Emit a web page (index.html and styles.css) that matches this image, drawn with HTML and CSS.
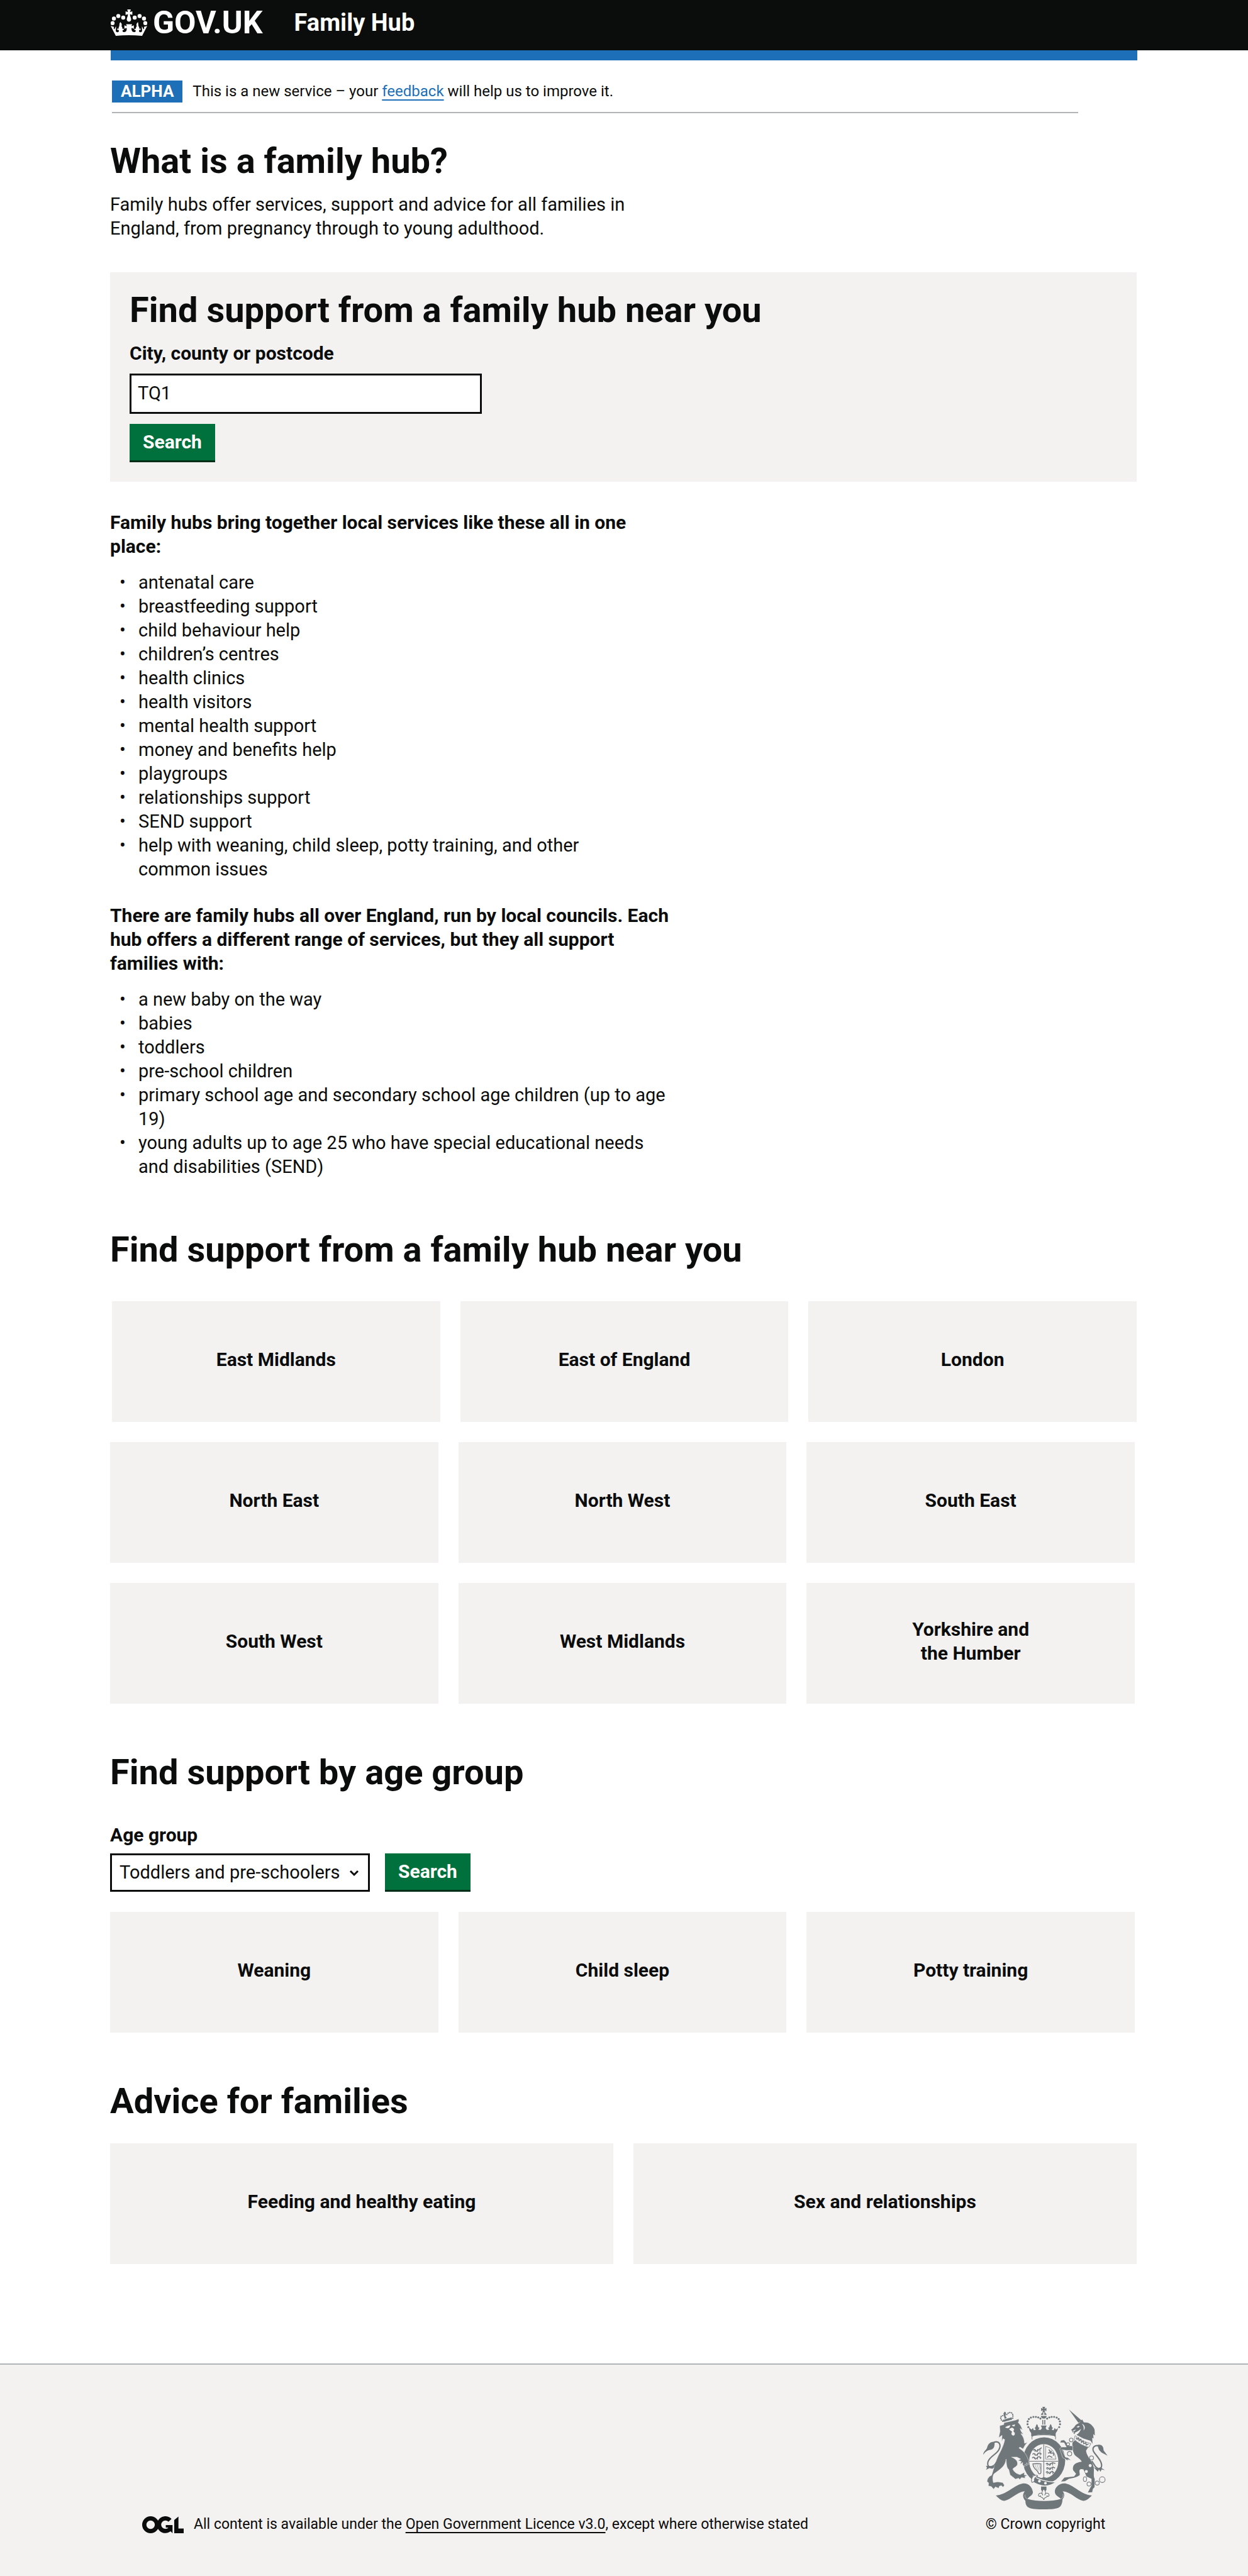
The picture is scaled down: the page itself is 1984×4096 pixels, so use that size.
FILE: index.html
```html
<!DOCTYPE html>
<html lang="en">
<head>
<meta charset="utf-8">
<meta name="viewport" content="width=device-width, initial-scale=1">
<title>Family Hub - GOV.UK</title>
<link rel="stylesheet" href="styles.css">
</head>
<body>
<header class="header">
  <div class="wrap header-inner">
    <a class="logo" href="#">
      <svg class="logo-crown" viewBox="60 54 216 156" fill="#fff" aria-hidden="true">
        <circle cx="71" cy="135" r="12"/><circle cx="79" cy="108" r="12"/><circle cx="105" cy="93" r="12"/><circle cx="134" cy="102" r="12"/>
        <circle cx="265" cy="135" r="12"/><circle cx="257" cy="108" r="12"/><circle cx="231" cy="93" r="12"/><circle cx="202" cy="102" r="12"/>
        <path d="M158 54h21l-5 16 14-5v21l-14-4 1 10c3 8 6 14 6 20 0 8-6 14-13 14s-13-6-13-14c0-6 3-12 6-20l1-10-14 4V65l14 5z"/>
        <path d="M90 210c50-5 105-5 156 0l30-58-20 5c3 6 3 10-1 15-3-5-5-10-10-19-2 15 5 30-3 34-6 4-17 2-14-8 2-6 8-6 10-3 1-10-7-12-9-5 1-10-2-14-5-19l-1-14-2-10-7 10c-2 6-2 9 0 15-4 5-6 10-5 18-3-7-11-4-9 5 4-4 9 0 8 6-2 8-14 8-20 2-5-6-6-15-4-21l13 5v-20l-15 5 5-12h-36l5 12-15-5v20l13-5c2 8 1 15-4 21-6 6-18 6-20-2-1-6 4-10 8-6 2-9-6-12-9-5 1-8-1-13-5-18 2-6 2-9 0-15l-7-10-5 10-1 14c-2 5-5 9-4 19-2-7-10-5-9 5 2-3 8-3 10 3 3 10-8 12-14 8-8-4-1-19-3-34-5 9-7 14-10 19-4-5-4-9-1-15l-20-5z"/>
      </svg>
      <span class="logo-text">GOV.UK</span>
    </a>
    <a class="service-name" href="#">Family Hub</a>
  </div>
</header>

<div class="wrap">
  <div class="blue-bar"></div>
  <div class="phase-banner">
    <strong class="tag">ALPHA</strong>
    <span>This is a new service – your <a class="link" href="#">feedback</a> will help us to improve it.</span>
  </div>
</div>

<main class="main">
  <h1 class="heading">What is a family hub?</h1>
  <p class="intro">Family hubs offer services, support and advice for all families in England, from pregnancy through to young adulthood.</p>

  <form class="panel">
    <h2 class="heading">Find support from a family hub near you</h2>
    <label class="label" for="place">City, county or postcode</label>
    <input class="input" id="place" type="text" value="TQ1">
    <button class="button" type="button">Search</button>
  </form>

  <p class="lead lead-first">Family hubs bring together local services like these all in one place:</p>
  <ul class="list list-services">
    <li>antenatal care</li>
    <li>breastfeeding support</li>
    <li>child behaviour help</li>
    <li>children’s centres</li>
    <li>health clinics</li>
    <li>health visitors</li>
    <li>mental health support</li>
    <li>money and benefits help</li>
    <li>playgroups</li>
    <li>relationships support</li>
    <li>SEND support</li>
    <li>help with weaning, child sleep, potty training, and other common issues</li>
  </ul>
  <p class="lead">There are family hubs all over England, run by local councils. Each hub offers a different range of services, but they all support families with:</p>
  <ul class="list">
    <li>a new baby on the way</li>
    <li>babies</li>
    <li>toddlers</li>
    <li>pre-school children</li>
    <li>primary school age and secondary school age children (up to age 19)</li>
    <li>young adults up to age 25 who have special educational needs and disabilities (SEND)</li>
  </ul>

  <section class="section section-first">
    <h2 class="heading">Find support from a family hub near you</h2>
    <div class="regions">
      <div class="cards cards-top">
        <a class="card" href="#">East Midlands</a>
        <a class="card" href="#">East of England</a>
        <a class="card" href="#">London</a>
      </div>
      <div class="cards">
        <a class="card" href="#">North East</a>
        <a class="card" href="#">North West</a>
        <a class="card" href="#">South East</a>
      </div>
      <div class="cards">
        <a class="card" href="#">South West</a>
        <a class="card" href="#">West Midlands</a>
        <a class="card" href="#">Yorkshire and<br>the Humber</a>
      </div>
    </div>
  </section>

  <section class="section">
    <h2 class="heading">Find support by age group</h2>
    <form class="age-form">
      <label class="label" for="age">Age group</label>
      <div class="age-row">
        <div class="select-box">
          <select class="select" id="age">
            <option>Toddlers and pre-schoolers</option>
          </select>
          <svg class="chevron" viewBox="0 0 16 12" fill="none" stroke="#0b0c0c" stroke-width="3" aria-hidden="true"><path d="M2 2l6 6 6-6"/></svg>
        </div>
        <button class="button" type="button">Search</button>
      </div>
    </form>
    <div class="cards">
      <a class="card" href="#">Weaning</a>
      <a class="card" href="#">Child sleep</a>
      <a class="card" href="#">Potty training</a>
    </div>
  </section>

  <section class="section">
    <h2 class="heading">Advice for families</h2>
    <div class="cards cards-two">
      <a class="card" href="#">Feeding and healthy eating</a>
      <a class="card" href="#">Sex and relationships</a>
    </div>
  </section>
</main>

<footer class="footer">
  <div class="wrap footer-inner">
    <div class="licence">
      <svg class="ogl" viewBox="36 36 246 100" fill="none" stroke="#0b0c0c" stroke-width="25" role="img" aria-label="Open Government Licence">
        <circle cx="86" cy="86" r="37.500"/>
        <path d="M201 60A37.500 37.500 0 1 0 202 110"/>
        <path d="M176 88h40v48l-11-11-15-13 3-9h-17z" fill="#0b0c0c" stroke="none"/>
        <path d="M226 58l25-20v70h31v28h-56z" fill="#0b0c0c" stroke="none"/>
      </svg>
      <span>All content is available under the <a class="licence-link" href="#">Open Government Licence v3.0</a>, except where otherwise stated</span>
    </div>
    <a class="copyright" href="#">
      <svg class="arms" viewBox="42 42 742 612" fill="#6f777b" aria-hidden="true">
        <!-- ribbon -->
        <path d="M117 571c62-3 108-61 158-71 38-6 58 22 63 50 2 22-24 26-32 42 60 16 140 16 199 0-10-14-36-18-36-44 0-26 28-54 66-48 50 10 92 68 155 71-18 17-33 33-52 32-42-8-74-54-122-57 14 18 10 34-1 48-4 52-20 60-110 60s-110-8-112-52c-14-14-20-36-3-56-46 3-82 50-122 57-20 0-36-18-51-32z"/>
        <path d="M306 592c-12-6-18-16-14-26M505 592c12-6 16-16 12-28" fill="none" stroke="#f3f2f1" stroke-width="2"/>
        <!-- garter, shield and belt -->
        <ellipse cx="405" cy="362" rx="126" ry="138"/>
        <ellipse cx="403" cy="366" rx="87" ry="102" fill="#f3f2f1"/>
        <path d="M403 264v204M316 367h174" fill="none" stroke="#6f777b" stroke-width="4"/>
        <g fill="none" stroke="#6f777b" stroke-width="6">
          <path d="M340 302q8-10 14 0t14 0 12-8l10-8M336 326q8-10 14 0t14 0 14-8l12 6M334 348q8-10 14 0t14 0 14-8l12 8"/>
          <path d="M350 296v14M366 294v16M380 292v18M350 320v12M366 318v16M382 314v18M350 342v12M366 340v16M382 340v14" stroke-width="4"/>
          <path d="M416 384q8-10 14 0t14 0 14-8l14 4M418 410q8-10 14 0t14 0 14-8l10 6M416 434q8-10 14 0t14 0 12-6l8 10"/>
          <path d="M424 378v16M440 376v18M456 376v16M424 402v16M440 402v16M456 402v16M424 428v16M440 428v16M456 428v14" stroke-width="4"/>
          <path d="M414 276v78h62M414 278q50 8 62 76" stroke-width="3"/>
          <path d="M424 346q8-14 14-10t16 8M432 298q10 4 8 14t12 6 8 16M428 318l14-4M450 304l-8 14" stroke-width="6"/>
          <path d="M338 382q26-2 48 0v54q-6 10-14 4c-4-24-30-20-34-58z" stroke-width="5"/>
          <path d="M350 384q4 24 20 38M362 384q4 20 16 38M374 384q2 14 8 28" stroke-width="2"/>
        </g>
        <path d="M388 468l14-6 20 4-12 12z"/>
        <path d="M340 454c30 22 90 40 140 36-20 14-48 24-72 25-30-3-54-14-76-28z" stroke="#f3f2f1" stroke-width="5"/>
        <path d="M366 452q-22-6-32 12t0 30l14-8q-4-20 12-26z" fill="#f3f2f1" stroke="#6f777b" stroke-width="4"/>
        <circle cx="377" cy="486" r="8" fill="#f3f2f1"/><circle cx="413" cy="498" r="8" fill="#f3f2f1"/>
        <path d="M387 518h32v20l-8 10h-16l-8-10z"/>
        <path d="M403 532c-14 16-14 26-6 38-2-18-24-16-26 0 2 8 10 8 12 4 2 12 10 8 14 12l6 10 6-10c4-4 12 0 14-12 2 4 10 4 12-4-2-16-24-18-26 0 8-12 8-22-6-38z" fill="#f3f2f1" stroke="#6f777b" stroke-width="4"/>
        <!-- royal crown -->
        <g>
          <circle cx="311" cy="163" r="6"/><circle cx="306" cy="146" r="6"/><circle cx="307" cy="129" r="6"/><circle cx="314" cy="115" r="6"/><circle cx="326" cy="106" r="6"/><circle cx="341" cy="102" r="6"/><circle cx="356" cy="102" r="6"/><circle cx="370" cy="105" r="6"/><circle cx="383" cy="112" r="6"/>
          <circle cx="495" cy="163" r="6"/><circle cx="500" cy="146" r="6"/><circle cx="499" cy="129" r="6"/><circle cx="492" cy="115" r="6"/><circle cx="480" cy="106" r="6"/><circle cx="465" cy="102" r="6"/><circle cx="450" cy="102" r="6"/><circle cx="436" cy="105" r="6"/><circle cx="423" cy="112" r="6"/>
        </g>
        <path d="M394 42h18l-5 11 12-4v18l-12-4 5 12h-18l5-12-12 4V49l12 4z"/>
        <path d="M400 76v14h-14q2-12 14-14zM406 76v14h14q-2-12-14-14zM385 96h36q-4 16-18 16t-18-16zM394 120h6v28h-6zM406 120h6v28h-6z"/>
        <path d="M318 168l12 10 8-10 6 14 12-4-8-10 6-4q2-12 8-20 6 8 8 20l8 4-8 10 14 2 8-10-6-16h34l-6 16 8 10 14-2-8-10 8-4q2-12 8-20 6 8 8 20l6 4-8 10 12 4 6-14 8 10 12-10q-2 20-14 32v18q-73-14-146 0v-18q-12-12-14-32z"/>
        <path d="M340 222q63-18 126 0" fill="none" stroke="#f3f2f1" stroke-width="14"/>
        <path d="M334 236c-6-12 0-24 18-24q51-6 102 0c18 0 24 12 18 24" fill="none" stroke="#6f777b" stroke-width="4"/>
        <!-- lion -->
        <g stroke="#f3f2f1" stroke-width="2">
          <path d="M140 155l24-7 2-11 70-16 17-7 2 12-5 10c12 10 19 24 26 44l-14-8c4 16 10 26 20 34l-16-4c14 18 20 30 22 58l18-6-14 16-13 24-18-12-6 6c26 18 38 30 48 52l10 24-2 24-12-12 4 18-12-10-2 16-12-12 0-14-16 12 8-18-20-6 16-8-22-12h-32c24 10 38 24 35 44-2 14-24 18-28 28 10 20 24 28 44 33l26-14-2 15 20 2-16 8 2 10-22-4-10 12-8-8-18 6-32-26-8-32c-14-8-14-40-16-62-4 44-34 60-72 88-10 16-8 34-4 52l26-4 30 4 10 16-8 12-10-10-12 4-4 12-20-8-10 14-14-16-18-4 2-18-10-8 4-16 10-14 14-8c14-44 24-84 40-118 14-26 32-60 38-94l-10-6-8 18 2-38-20 14 8-38-2-22z"/>
        </g>
        <path d="M172 164l16-8 16-4-6 14q-14 8-26-2zM212 152l20-5-4 11q-10 2-16-6zM196 174l18-8 12 8-4 14 8 10q2 16-10 16-10-2-10-14l4-10-14-10z" fill="#f3f2f1"/>
        <path d="M104 254c32-12 48 14 30 46-20 32-76 50-64 92 6 12 26 12 42-6l16-24" fill="none" stroke="#6f777b" stroke-width="8"/>
        <path d="M42 328c0-24 22-28 24-48 8-22 24-32 44-28-2 18 2 38-22 46-18 2-34 10-46 30zM58 394l46 4 14-4-22 18-18-4-20 10 6-12z"/>
        <path d="M164 132l-6-10 54-16 2 12zM170 70l8 8-4 18 8 12-12 6-4-16-4-16z"/>
        <g fill="none" stroke="#6f777b" stroke-width="8" stroke-dasharray="1 10" stroke-linecap="round"><path d="M158 128q-14-10-12-26 10-10 24-8M182 88q10-14 26-12 14 8 10 34"/></g>
        <path d="M161 124l52-16" fill="none" stroke="#6f777b" stroke-width="9" stroke-dasharray="6 3"/>
        <!-- unicorn -->
        <path d="M553 58l76 66-19 14z"/>
        <path d="M566 180l18-16 10-14 20-12 18-21 10 18c30-2 44 10 58 30 10 14 6 28 8 48l-10-8 2 26-8-4 2 36-12-18-44-14-40-22c12-6 22-20 28-36l-18 14-20 10 0 8-8-4 4-10-10 4-2-10z"/>
        <path d="M598 162l14-6 6 4-10 6zM630 142c18 8 24 26 10 42 4-16 2-28-10-42zM576 186l18-10-4 8-12 6z" fill="#f3f2f1"/>
        <path d="M574 256l14-14 80 42-13 20c6 42 40 60 46 98 4 26-4 52 6 70l-1 50-10 10-4 20-26 2 14-28 8-14 0-40-30-14-18-42c-18-6-26 0-24 14l2 18c-12 14-42 18-66 24l-22 14-24 2 20-24 58-6 12-16-18-22c-6-30 14-46 52-50-10-20-28-26-42-40-10-18-16-38-14-74z"/>
        <path d="M590 214q40 34 94 48l-12 22q-50-12-88-48z" fill="#f3f2f1" stroke="#6f777b" stroke-width="3"/>
        <path d="M596 226l6 10 8-8 4 16 10-8 4 18 10-8 4 16 12-6 2 14 14-6" fill="none" stroke="#6f777b" stroke-width="6"/>
        <path d="M500 256l6-14 18-2 12 12 14 22 26 2v26l-38 0-28-4 22 44 16 4 18 16-20-6 0 8-14-10-16-8-18-54 12-10 28 0-14-26z" stroke="#f3f2f1" stroke-width="2"/>
        <path d="M734 276c-30-10-46 12-32 36 16 24 56 60 44 92-8 14-24 6-34-4l-22-34" fill="none" stroke="#6f777b" stroke-width="8"/>
        <path d="M724 270c20-6 36 4 36 32l24 32-34-18c-14-12-20-16-26-46zM700 402l26 10 14-10 28 18-20-4-6 14-10-14-6 14z"/>
        <g fill="none" stroke="#6f777b" stroke-width="4">
          <circle cx="567" cy="240" r="11"/><circle cx="548" cy="265" r="9" fill="#f3f2f1"/><circle cx="557" cy="322" r="13"/><circle cx="688" cy="347" r="12" fill="#f3f2f1"/>
          <ellipse cx="649" cy="474" rx="10" ry="14"/><circle cx="673" cy="503" r="12"/><circle cx="722" cy="497" r="12"/><circle cx="752" cy="477" r="17"/>
        </g>
        <circle cx="680" cy="393" r="9" fill="#f3f2f1"/><circle cx="657" cy="428" r="9" fill="#f3f2f1"/>
      </svg>
      <span>© Crown copyright</span>
    </a>
  </div>
</footer>
</body>
</html>
```
FILE: styles.css
```css
* { box-sizing: border-box; }

body {
  margin: 0;
  background: #fff;
  color: #0b0c0c;
  font-family: Roboto, "Liberation Sans", sans-serif;
  font-size: 29px;
  line-height: 38px;
}

h1, h2, p, ul { margin: 0; }

.wrap { max-width: 1632px; margin: 0 auto; }

/* Header */
.header { background: #0b0c0c; }
.header-inner {
  display: flex;
  align-items: center;
  gap: 50px;
  height: 80px;
  padding-bottom: 8px;
}
.logo {
  display: flex;
  align-items: center;
  gap: 9px;
  color: #fff;
  text-decoration: none;
}
.logo-crown { width: 58px; height: 42px; }
.logo-text { font-size: 50px; font-weight: 700; }
.service-name {
  color: #fff;
  font-size: 38px;
  font-weight: 700;
  text-decoration: none;
}

.blue-bar { height: 16px; background: #1d70b8; }

.phase-banner {
  display: flex;
  align-items: center;
  gap: 16px;
  max-width: 1536px;
  margin-left: 2px;
  padding: 32px 0 15px;
  border-bottom: 2px solid #b1b4b6;
  font-size: 24px;
  line-height: 35px;
}
.tag {
  padding: 0 14px;
  background: #1d70b8;
  color: #fff;
  font-size: 26px;
}
.link {
  color: #1d70b8;
  text-decoration: underline;
  text-decoration-thickness: 2px;
  text-underline-offset: 5px;
  text-decoration-skip-ink: none;
}

/* Main column */
.main {
  max-width: 1634px;
  margin: 0 auto;
  padding: 44px 2px 158px 0;
}
.heading { font-size: 56px; font-weight: 700; line-height: 64px; }
.intro { max-width: 900px; margin-top: 18px; }

.panel {
  display: flex;
  flex-direction: column;
  align-items: flex-start;
  margin-top: 51px;
  padding: 28px 31px 31px;
  background: #f3f2f1;
}
.label { margin-top: 18px; font-size: 30px; font-weight: 700; }
.input {
  width: 560px;
  max-width: 100%;
  height: 64px;
  margin: 13px 0 16px;
  padding: 0 10px 3px;
  border: 3px solid #0b0c0c;
  border-radius: 0;
  background: #fff;
  color: inherit;
  font: inherit;
}
.button {
  height: 61px;
  padding: 0 21px 2px;
  border: 0;
  border-bottom: 3px solid #002d18;
  background: #00703c;
  color: #fff;
  font-family: inherit;
  font-size: 30px;
  font-weight: 700;
}

.lead { max-width: 900px; margin-top: 36px; font-size: 30px; font-weight: 700; }
.lead-first { margin-top: 46px; }
.list {
  max-width: 886px;
  margin-top: 19px;
  padding-left: 45px;
  list-style-type: "•\00a0\00a0\2009";
}
.list-services { max-width: 840px; }

/* Sections and cards */
.section { margin-top: 77px; }
.section-first { margin-top: 81px; }
.regions { display: grid; gap: 32px; margin-top: 50px; }
.cards {
  display: grid;
  grid-template-columns: repeat(3, 1fr);
  gap: 32px;
  padding-right: 3px;
}
.cards-top { padding: 0 0 0 3px; }
.cards-two { grid-template-columns: repeat(2, 1fr); margin-top: 35px; padding-right: 0; }
.card {
  display: flex;
  align-items: center;
  justify-content: center;
  height: 192px;
  padding-bottom: 6px;
  background: #f3f2f1;
  color: #0b0c0c;
  font-size: 30px;
  font-weight: 700;
  text-align: center;
  text-decoration: none;
}

.age-form { display: flex; flex-direction: column; margin: 31px 0 32px; }
.age-row { display: flex; gap: 24px; margin-top: 10px; }
.select-box { position: relative; }
.select {
  width: 413px;
  height: 61px;
  padding: 0 12px 2px;
  appearance: none;
  border: 3px solid #0b0c0c;
  border-radius: 0;
  background: #fff;
  color: inherit;
  font: inherit;
}
.chevron {
  position: absolute;
  top: 26px;
  right: 17px;
  width: 16px;
  height: 12px;
  pointer-events: none;
}

/* Footer */
.footer {
  padding: 67px 0;
  border-top: 2px solid #b1b4b6;
  background: #f3f2f1;
  font-size: 23px;
  line-height: 30px;
}
.footer-inner {
  display: flex;
  align-items: flex-end;
  justify-content: space-between;
  padding: 0 47px 0 50px;
}
.licence { display: flex; align-items: center; gap: 16px; }
.ogl { width: 66px; height: 27px; }
.licence-link {
  color: inherit;
  text-decoration: underline;
  text-decoration-thickness: 2px;
  text-underline-offset: 5px;
  text-decoration-skip-ink: none;
}
.copyright {
  display: flex;
  flex-direction: column;
  align-items: center;
  gap: 9px;
  color: inherit;
  text-decoration: none;
}
.arms { width: 198px; height: 163px; }
```
